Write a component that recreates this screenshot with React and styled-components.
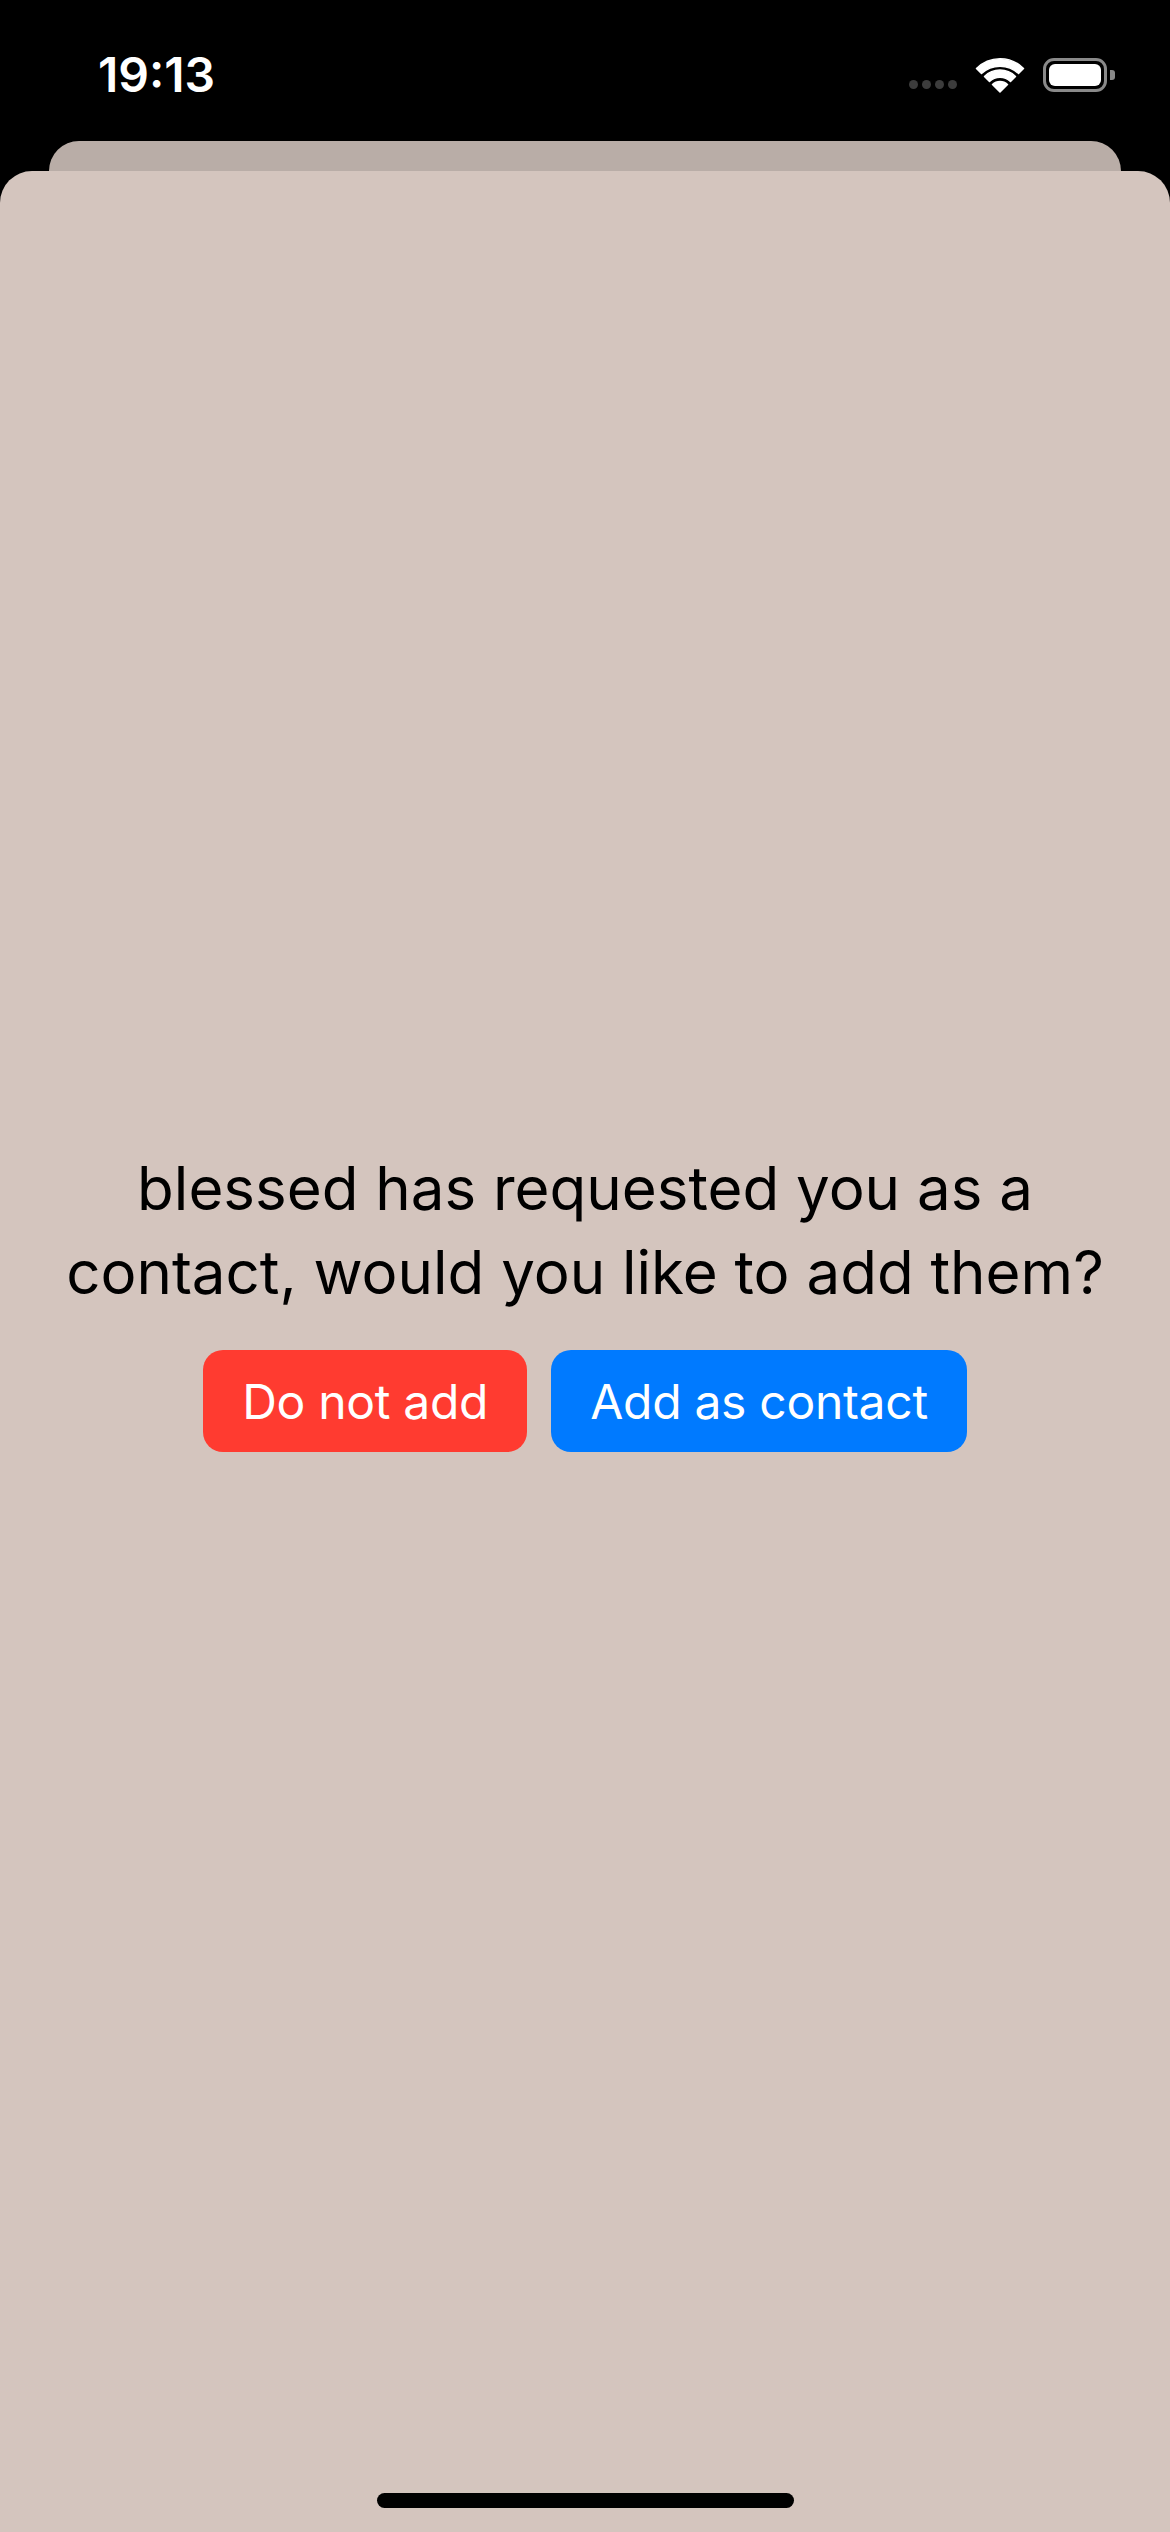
import styled, { createGlobalStyle } from 'styled-components'

const GlobalStyle = createGlobalStyle`
  html, body {
    margin: 0;
    padding: 0;
    background: #000;
  }
  * { box-sizing: border-box; }
`

export default function App () {
  return (
    <Screen>
      <GlobalStyle />
      <StatusBar>
        <Clock>19:13</Clock>
        <StatusIcons>
          <Signal>
            <Dot /><Dot /><Dot /><Dot />
          </Signal>
          <svg width='50' height='36' viewBox='0 0 50 36' fill='#fff' stroke='#fff' strokeWidth='1.5' strokeLinejoin='round'>
            <path d='M1.5 11.5 A33 33 0 0 1 48.5 11.5 L43.5 16.5 A27 27 0 0 0 6.5 16.5 Z' />
            <path d='M9.5 19.5 A22 22 0 0 1 40.5 19.5 L35.5 24.5 A15 15 0 0 0 14.5 24.5 Z' />
            <path d='M17.5 27.5 A11 11 0 0 1 32.5 27.5 L25 35 Z' />
          </svg>
          <Battery>
            <BatteryBody>
              <BatteryFill />
            </BatteryBody>
            <BatteryCap />
          </Battery>
        </StatusIcons>
      </StatusBar>
      <BackSheet />
      <Sheet>
        <Content>
          <Message>
            blessed has requested you as a contact, would you like to add them?
          </Message>
          <Actions>
            <ActionButton color='#ff3b30'>Do not add</ActionButton>
            <ActionButton color='#007aff'>Add as contact</ActionButton>
          </Actions>
        </Content>
        <HomeIndicator />
      </Sheet>
    </Screen>
  )
}

const Screen = styled.div`
height: 100vh;
width: 100%;
display: flex;
flex-direction: column;
background: #000;
font-family: Inter, "Noto Sans", sans-serif;
overflow: hidden;
`
const StatusBar = styled.div`
height: 141px;
flex-shrink: 0;
display: flex;
justify-content: space-between;
align-items: center;
padding: 8px 55px 0 98px;
`
const Clock = styled.div`
color: #fff;
font-size: 48px;
font-weight: 600;
letter-spacing: 0px;
`
const StatusIcons = styled.div`
display: flex;
align-items: center;
gap: 18px;
`
const Signal = styled.div`
display: flex;
gap: 4px;
align-self: flex-end;
margin-bottom: 4px;
`
const Dot = styled.span`
width: 9px;
height: 9px;
border-radius: 50%;
background: #3c3c3c;
`
const Battery = styled.div`
display: flex;
align-items: center;
gap: 3px;
`
const BatteryBody = styled.div`
width: 64px;
height: 34px;
border: 3px solid #8a8a8a;
border-radius: 11px;
padding: 3px;
`
const BatteryFill = styled.div`
width: 100%;
height: 100%;
background: #fff;
border-radius: 6px;
`
const BatteryCap = styled.div`
width: 5px;
height: 10px;
background: #8a8a8a;
border-radius: 0 3px 3px 0;
`
const BackSheet = styled.div`
flex-shrink: 0;
height: 60px;
margin: 0 49px -30px;
background: #b9ada7;
border-radius: 30px 30px 0 0;
`
const Sheet = styled.div`
flex: 1;
position: relative;
display: flex;
flex-direction: column;
background: #d4c5be;
border-radius: 32px 32px 0 0;
`
const Content = styled.div`
flex: 1;
display: flex;
flex-direction: column;
align-items: center;
justify-content: center;
padding: 0 40px;
`
const Message = styled.p`
margin: 0;
max-width: 1060px;
text-align: center;
color: #000;
font-size: 60px;
line-height: 84px;
font-weight: 400;
`
const Actions = styled.div`
display: flex;
gap: 24px;
margin-top: 36px;
`
const ActionButton = styled.button`
height: 102px;
padding: 0 39px;
border: none;
border-radius: 20px;
background: ${({ color }) => color};
color: #fff;
font-family: inherit;
font-size: 48px;
font-weight: 400;
letter-spacing: -0.3px;
`
const HomeIndicator = styled.div`
width: 417px;
height: 15px;
margin: 66px auto 24px;
border-radius: 8px;
background: #000;
`
